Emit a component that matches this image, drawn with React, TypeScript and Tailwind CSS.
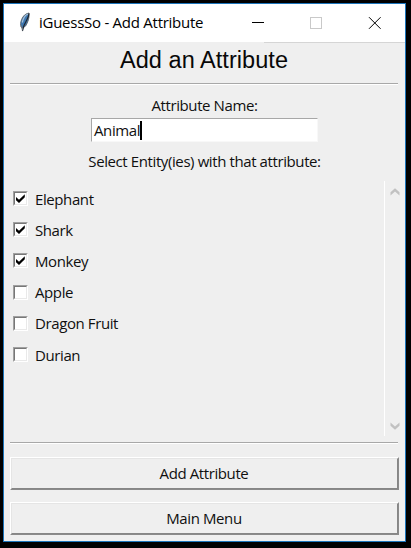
import React from "react";

const uiFont = "font-['Open_Sans','Noto_Sans',sans-serif]";
const bodyText = "text-[15px] leading-[20px] tracking-[-0.4px] whitespace-nowrap";

const entities = [
  { name: "Elephant", checked: true },
  { name: "Shark", checked: true },
  { name: "Monkey", checked: true },
  { name: "Apple", checked: false },
  { name: "Dragon Fruit", checked: false },
  { name: "Durian", checked: false },
];

function Feather() {
  return (
    <svg width="14" height="21" viewBox="0 0 14 21" className="shrink-0">
      <path d="M11 2C7.5 2.5 5 5 3.6 8.5C2.3 12 2.4 13.5 3 16L4.6 17L7.6 15C10 11 11.5 7 11 2Z" fill="#3f78b0" stroke="#5b6268" strokeWidth="0.9" />
      <path d="M10 3C7.5 4 5.2 7 4.3 11.5" fill="none" stroke="#a9c3da" strokeWidth="1.3" />
      <path d="M11 2.5C10.8 6 9.2 8 8 10.5L6 14.5L4.4 20" fill="none" stroke="#1e2731" strokeWidth="1.2" />
      <path d="M3.3 14.5L4.5 19.5" stroke="#68707a" strokeWidth="1" />
    </svg>
  );
}

function TitleBar() {
  return (
    <div className="flex h-[38px] shrink-0 items-start bg-white">
      <div className="ml-[14px] mt-[7px] h-[21px] w-[14px]"><Feather /></div>
      <span className={`ml-[7px] mt-[7px] whitespace-nowrap text-[15px] leading-[22px] tracking-[-0.26px] text-black ${uiFont}`}>
        iGuessSo - Add Attribute
      </span>
      <svg width="130" height="14" viewBox="0 0 130 14" className="ml-auto mr-[24px] mt-[12px] shrink-0" shapeRendering="crispEdges">
        <path d="M1 6.5H13" stroke="#000" />
        <rect x="59.5" y="1.5" width="11" height="11" fill="none" stroke="#c9c9c9" />
        <path d="M118 1.2L129.6 12.8M129.6 1.2L118 12.8" stroke="#000" strokeWidth="1" shapeRendering="auto" />
      </svg>
    </div>
  );
}

function Separator() {
  return <div className="ml-[6px] h-[2px] w-[388px] shrink-0 border-b border-t border-b-white border-t-[#a8a8a8]" />;
}

function Checkbox({ checked }: { checked: boolean }) {
  return (
    <span className="block h-[15px] w-[15px] shrink-0 border border-b-white border-l-[#a0a0a0] border-r-white border-t-[#a0a0a0]">
      <span className="block h-[13px] w-[13px] border border-b-[#e9e9e9] border-l-[#777] border-r-[#e9e9e9] border-t-[#777] bg-white">
        {checked && (
          <svg width="11" height="11" viewBox="0 0 11 11" className="block">
            <path d="M1 4.1L4 6.7L9.8 1.2V4.3L4 9.9L1 7.3Z" fill="#000" />
          </svg>
        )}
      </span>
    </span>
  );
}

function Button({ label }: { label: string }) {
  return (
    <div className="ml-[6px] h-[33px] w-[389px] shrink-0 border border-b-[#8a8a8a] border-l-white border-r-[#8a8a8a] border-t-white">
      <div className={`flex h-full items-center justify-center border border-b-[#868686] border-l-[#e5e5e5] border-r-[#868686] border-t-[#e5e5e5] pb-[2px] pr-px ${bodyText} ${uiFont}`}>
        <span>{label}</span>
      </div>
    </div>
  );
}

function Chevron({ down = false }: { down?: boolean }) {
  return (
    <svg width="10" height="8" viewBox="0 0 10 8" className={down ? "rotate-180" : ""}>
      <path d="M0.5 4.2L5 0.2L9.5 4.2V7.4L5 3.6L0.5 7.4Z" fill="#c1c1c1" />
    </svg>
  );
}

export default function App() {
  return (
    <div className="h-[548px] w-[411px] overflow-hidden bg-black pl-[3px] pt-[3px] text-[#101010]">
      <div className="flex h-[539px] w-[403px] flex-col border border-[#1c75bb] bg-[#efefef]">
        <TitleBar />
        <div className="ml-[260px] h-px shrink-0 bg-[#d5d5d5]" />
        <h1 className="h-[40px] shrink-0 whitespace-nowrap pr-px pt-[4px] text-center font-['Liberation_Sans',sans-serif] text-[23.5px] leading-[27px] tracking-[0.05px] text-[#080808]">
          Add an Attribute
        </h1>
        <Separator />
        <div className={`h-[33px] shrink-0 pt-[10px] text-center ${bodyText} ${uiFont}`}>
          Attribute Name:
        </div>
        <div className={`ml-[87px] flex h-[24px] w-[227px] shrink-0 items-center border border-b-[#f8f8f8] border-l-[#a7a7a7] border-r-[#f8f8f8] border-t-[#a7a7a7] bg-white pb-px pl-[2px] ${bodyText} ${uiFont}`}>
          <span>Animal</span>
          <span className="mt-px h-[19px] w-[2px] bg-black" />
        </div>
        <div className={`h-[39px] shrink-0 pt-[9px] text-center ${bodyText} ${uiFont}`}>
          Select Entity(ies) with that attribute:
        </div>
        <div className="flex h-[255px] shrink-0">
          <div className="flex h-[190px] w-[380px] flex-col pl-[9px] pt-[2px]">
            {entities.map((entity) => (
              <label key={entity.name} className={`flex h-[31.2px] shrink-0 items-center gap-[7px] ${bodyText} ${uiFont}`}>
                <Checkbox checked={entity.checked} />
                <span>{entity.name}</span>
              </label>
            ))}
          </div>
          <div className="flex w-[21px] flex-col items-center justify-between border-l border-white pb-[6px] pt-[7px]">
            <Chevron />
            <Chevron down />
          </div>
        </div>
        <div className="mt-[6px]"><Separator /></div>
        <div className="mt-[13px] flex flex-col gap-[12px]">
          <Button label="Add Attribute" />
          <Button label="Main Menu" />
        </div>
      </div>
    </div>
  );
}
